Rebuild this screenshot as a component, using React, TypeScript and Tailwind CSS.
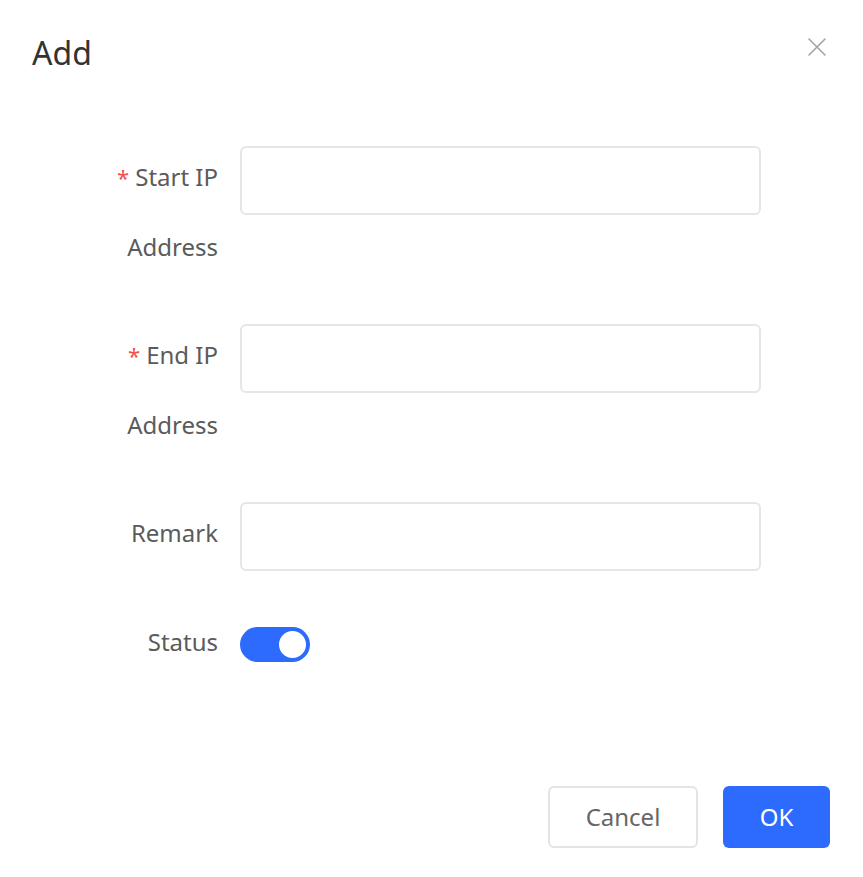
import React from 'react';

function Field({ label, required }: { label: string[]; required?: boolean }) {
  return (
    <div className="flex items-start">
      <div className="w-[218px] -translate-y-[4px] text-right text-[24px] leading-[69px] text-[#5b5b5b]">
        {label.map((line, i) => (
          <div key={i}>
            {i === 0 && required && <span className="mr-[6px] text-[22px] text-[#f0504a]">*</span>}
            {line}
          </div>
        ))}
      </div>
      <div className="ml-[22px] h-[69px] w-[521px] rounded-[6px] border-2 border-[#e6e6e6] bg-white" />
    </div>
  );
}

export default function App() {
  return (
    <div
      className="h-[877px] w-[863px] bg-white"
      style={{ fontFamily: '"Noto Sans", "Liberation Sans", sans-serif' }}
    >
      {/* Header */}
      <div className="flex items-start justify-between pl-[32px] pr-[36px] pt-[30px]">
        <h1 className="text-[32px] leading-[46px] text-[#333]">Add</h1>
        <button className="mt-[7px] text-[#a0a3a8]">
          <svg width="20" height="20" viewBox="0 0 20 20" fill="none" stroke="currentColor" strokeWidth="1.6" strokeLinecap="round">
            <path d="M2 2L18 18M18 2L2 18" />
          </svg>
        </button>
      </div>

      {/* Form */}
      <div className="mt-[70px] flex flex-col gap-[39px]">
        <Field label={['Start IP', 'Address']} required />
        <Field label={['End IP', 'Address']} required />
        <Field label={['Remark']} />
        <div className="flex items-center">
          <div className="w-[218px] -translate-y-[3px] text-right text-[24px] leading-[69px] text-[#5b5b5b]">Status</div>
          <div className="ml-[22px] flex h-[35px] w-[70px] items-center justify-end rounded-full bg-[#2d6bff] pr-[2px]">
            <div className="h-[31px] w-[31px] rounded-full border-2 border-[#2d6bff] bg-white" />
          </div>
        </div>
      </div>

      {/* Footer */}
      <div className="mt-[107px] flex justify-end gap-[25px] pr-[33px]">
        <button className="h-[62px] w-[150px] rounded-[6px] border-2 border-[#e4e4e4] bg-white text-[24px] text-[#666]">
          Cancel
        </button>
        <button className="h-[62px] w-[107px] rounded-[6px] bg-[#2d6bff] text-[24px] text-white">OK</button>
      </div>
    </div>
  );
}
